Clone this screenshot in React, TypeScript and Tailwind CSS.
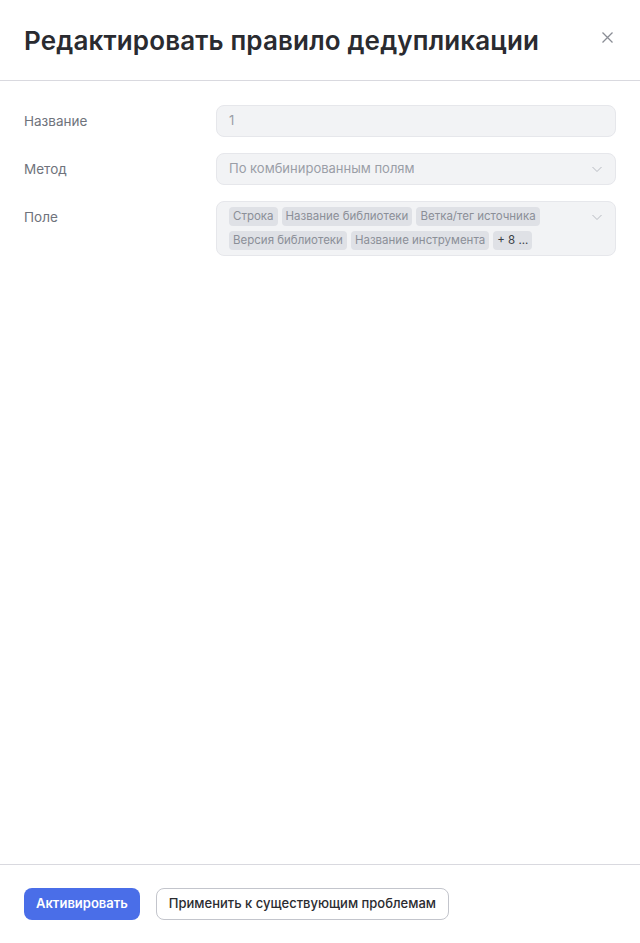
import { type JSX } from 'react'

const TAGS_ROW1 = ['Строка', 'Название библиотеки', 'Ветка/тег источника']
const TAGS_ROW2 = ['Версия библиотеки', 'Название инструмента']

function Chevron(): JSX.Element {
	return (
		<svg width="12" height="12" viewBox="0 0 12 12" fill="none" className="shrink-0">
			<path d="M1.5 4 L6 8.5 L10.5 4" stroke="#b9bcc3" strokeWidth="1" />
		</svg>
	)
}

function Tag({ text, dark }: { text: string; dark?: boolean }): JSX.Element {
	return (
		<span
			className={`h-[19px] px-[4px] rounded-[4px] bg-[#dfe1e6] text-[11.5px] leading-[19px] whitespace-nowrap ${
				dark ? 'text-[#3b3e45]' : 'text-[#8b8f98]'
			}`}
		>
			{text}
		</span>
	)
}

export default function App(): JSX.Element {
	return (
		<div className="flex flex-col h-[943px] bg-white font-['Inter',sans-serif]">
			<header className="flex items-center justify-between h-[81px] px-6 border-b border-[#d9d9df]">
				<h1 className="text-[26px] font-semibold text-[#2a2b30] tracking-[0.15px]">
					Редактировать правило дедупликации
				</h1>
				<button className="mr-[3px] -mt-[6px]">
					<svg width="11" height="11" viewBox="0 0 11 11" fill="none">
						<path d="M0.5 0.5 L10.5 10.5 M10.5 0.5 L0.5 10.5" stroke="#8a8d95" strokeWidth="1.3" />
					</svg>
				</button>
			</header>

			<main className="flex-1 flex flex-col gap-4 px-6 pt-6">
				<div className="flex items-center">
					<label className="w-[192px] text-[13.5px] text-[#6f737c]">Название</label>
					<div className="flex-1 h-[32px] flex items-center px-3 rounded-[8px] bg-[#f2f3f5] border border-[#e6e7eb] text-[13px] text-[#9a9ea7]">
						1
					</div>
				</div>

				<div className="flex items-center">
					<label className="w-[192px] text-[13.5px] text-[#6f737c]">Метод</label>
					<div className="flex-1 h-[32px] flex items-center justify-between px-3 rounded-[8px] bg-[#f2f3f5] border border-[#e6e7eb] text-[13px] text-[#9a9ea7]">
						<span>По комбинированным полям</span>
						<Chevron />
					</div>
				</div>

				<div className="flex items-start">
					<label className="w-[192px] pt-[6px] text-[13.5px] text-[#6f737c]">Поле</label>
					<div className="flex-1 flex justify-between pl-3 pr-3 pt-[5px] pb-[5px] rounded-[8px] bg-[#f2f3f5] border border-[#e6e7eb]">
						<div className="flex flex-col gap-[5px]">
							<div className="flex gap-[4px]">
								{TAGS_ROW1.map(t => (
									<Tag key={t} text={t} />
								))}
							</div>
							<div className="flex gap-[4px]">
								{TAGS_ROW2.map(t => (
									<Tag key={t} text={t} />
								))}
								<Tag text="+ 8 ..." dark />
							</div>
						</div>
						<div className="pt-[4px]">
							<Chevron />
						</div>
					</div>
				</div>
			</main>

			<footer className="flex items-center gap-4 h-[79px] px-6 border-t border-[#d9d9df]">
				<button className="h-[32px] px-3 rounded-[8px] bg-[#4a6ee8] text-white text-[13px] font-semibold">
					Активировать
				</button>
				<button className="h-[32px] px-3 rounded-[8px] border border-[#c3c5cc] text-[#2a2b30] text-[13px] font-medium">
					Применить к существующим проблемам
				</button>
			</footer>
		</div>
	)
}
